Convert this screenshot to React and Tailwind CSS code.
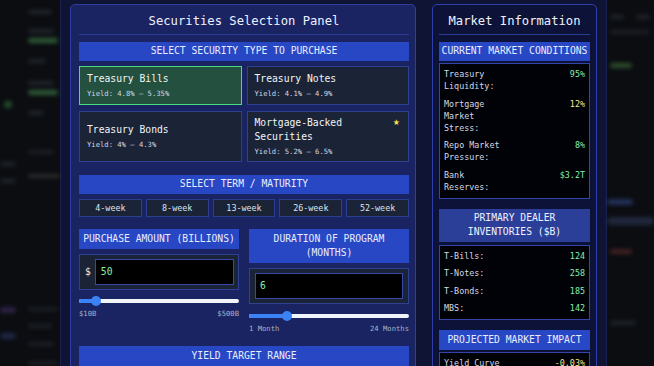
import React from 'react';

const securities = [
  { name: 'Treasury Bills', yieldRange: '4.8% – 5.35%', selected: true },
  { name: 'Treasury Notes', yieldRange: '4.1% – 4.9%' },
  { name: 'Treasury Bonds', yieldRange: '4% – 4.3%' },
  { name: 'Mortgage-Backed Securities', yieldRange: '5.2% – 6.5%', star: true },
];

const terms = ['4-week', '8-week', '13-week', '26-week', '52-week'];

const conditions = [
  { label: 'Treasury Liquidity:', value: '95%', tone: 'green' },
  { label: 'Mortgage Market Stress:', value: '12%', tone: 'yellow' },
  { label: 'Repo Market Pressure:', value: '8%', tone: 'green' },
  { label: 'Bank Reserves:', value: '$3.2T', tone: 'green' },
];

const inventories = [
  { label: 'T-Bills:', value: '124' },
  { label: 'T-Notes:', value: '258' },
  { label: 'T-Bonds:', value: '185' },
  { label: 'MBS:', value: '142' },
];

const impact = [
  { label: 'Yield Curve Impact:', value: '-0.03%', tone: 'yellow' },
  { label: 'Mortgage Rate Effect:', value: '-0.02%', tone: 'green' },
];

const toneClass = (tone) => (tone === 'yellow' ? 'text-[#fde68a]' : 'text-[#86efac]');

// blurred dashboard behind the modal
const Bar = ({ className }) => <div className={`h-[4px] rounded-sm ${className}`}></div>;

const Slider = ({ percent }) => (
  <div className="relative flex h-[10px] items-center">
    <div className="h-[4px] w-full overflow-hidden rounded-full bg-[#f1f5f9]">
      <div className="h-full bg-[#3b82f6]" style={{ width: `${percent}%` }}></div>
    </div>
    <div className="absolute top-0 -ml-[5px] h-[10px] w-[10px] rounded-full bg-[#3b82f6]" style={{ left: `${percent}%` }}></div>
  </div>
);

const PanelTitle = ({ children }) => (
  <div className="border-b border-[#2b3c95] pt-[8px] pb-[5px] text-center text-[12.2px] leading-[16px] text-[#eef2ff]">
    {children}
  </div>
);

const InfoBox = ({ rows, className = '' }) => (
  <div className={`flex flex-col gap-[5.5px] border border-[#3345a8] bg-[#010208] px-[4px] pt-[4px] pb-[5px] text-[8.4px] leading-[12px] text-[#d4d8e2] ${className}`}>
    {rows.map((row) => (
      <div key={row.label} className="flex items-start justify-between">
        <span className="max-w-[66px]">{row.label}</span>
        <span className={`text-right ${toneClass(row.tone)}`}>{row.value}</span>
      </div>
    ))}
  </div>
);

const Header = ({ children, className = '' }) => (
  <div className={`flex items-center justify-center whitespace-nowrap bg-[#2847c4] text-[9.7px] text-[#e8edff] ${className}`}>
    {children}
  </div>
);

export default function App() {
  return (
    <div className="flex h-[366px] w-[654px] overflow-hidden bg-[#0b0d11] font-['DejaVu_Sans_Mono','Liberation_Mono',monospace]">
      {/* left edge of the dimmed dashboard */}
      <div className="flex w-[60px] shrink-0 gap-[12px] opacity-70 blur-[2px]">
        <div className="flex w-[16px] flex-col pt-[101px]">
          <div className="ml-[4px] h-[7px] w-[8px] rounded-sm bg-[#2f6a36]"></div>
          <div className="mt-[54px] flex flex-col gap-[13px]">
            <Bar className="w-[16px] bg-[#2b3038]" />
            <Bar className="w-[16px] bg-[#2b3038]" />
          </div>
          <div className="mt-[124px] flex flex-col gap-[20px]">
            <div className="h-[6px] w-[16px] rounded-sm bg-[#3b2b5c]"></div>
            <div className="h-[6px] w-[16px] rounded-sm bg-[#26325e]"></div>
          </div>
        </div>
        <div className="flex flex-1 flex-col gap-[5px] pt-[10px]">
          <Bar className="w-[24px] bg-[#2b3038]" />
          <Bar className="mt-[10px] w-[26px] bg-[#2b3038]" />
          <div className="h-[5px] w-[30px] rounded-sm bg-[#3f7d48]"></div>
          <Bar className="mt-[11px] w-[18px] bg-[#2b3038]" />
          <Bar className="mt-[13px] w-[26px] bg-[#2b3038]" />
          <div className="h-[5px] w-[30px] rounded-sm bg-[#3f7d48]"></div>
          <Bar className="mt-[11px] w-[16px] bg-[#2b3038]" />
          <Bar className="mt-[30px] w-[26px] bg-[#23272e]" />
          <Bar className="mt-[15px] w-[32px] bg-[#3a3a36]" />
          <Bar className="mt-[124px] w-[30px] bg-[#23272e]" />
          <Bar className="mt-[8px] w-[24px] bg-[#23272e]" />
          <Bar className="mt-[9px] w-[26px] bg-[#23272e]" />
          <Bar className="mt-[10px] w-[30px] bg-[#23272e]" />
        </div>
      </div>

      {/* modal */}
      <div className="flex w-[547px] shrink-0 items-start gap-[16px] border-x border-[#1b2150] bg-[#0f1434] px-[9px] pt-[4px]">
        {/* Securities Selection Panel */}
        <div className="h-[400px] w-[346px] shrink-0 rounded-t-[5px] border border-[#2f3f9f] bg-[#1b2462] pl-[8px] pr-[6px]">
          <PanelTitle>Securities Selection Panel</PanelTitle>

          <Header className="mt-[7px] h-[19px]">SELECT SECURITY TYPE TO PURCHASE</Header>

          <div className="mt-[5px] grid grid-cols-2 grid-rows-[39px_51px] gap-x-[5px] gap-y-[6px]">
            {securities.map((s) => (
              <div
                key={s.name}
                className={`flex flex-col justify-center border px-[7px] ${
                  s.selected ? 'border-[#4ade80] bg-[#24513f]' : 'border-[#2e4191] bg-[#1b2436]'
                }`}
              >
                <div className="flex items-start justify-between">
                  <span className="text-[9.7px] leading-[14px] text-[#f1f5f9]">{s.name}</span>
                  {s.star && <span className="mt-[1px] mr-[1px] font-['DejaVu_Sans',sans-serif] text-[8px] leading-[12px] text-[#fde047]">★</span>}
                </div>
                <div className="mt-[3px] text-[7.2px] leading-[10px] text-[#cfd6e4]">Yield: {s.yieldRange}</div>
              </div>
            ))}
          </div>

          <Header className="mt-[13px] h-[19px]">SELECT TERM / MATURITY</Header>

          <div className="mt-[5px] grid grid-cols-5 gap-[4px]">
            {terms.map((t) => (
              <div key={t} className="flex h-[18px] items-center justify-center border border-[#2c3e8e] bg-[#1b2436] text-[8.4px] text-[#dde3ef]">
                {t}
              </div>
            ))}
          </div>

          <div className="mt-[12px] grid grid-cols-2 gap-x-[10px]">
            <div>
              <Header className="h-[20px]">PURCHASE AMOUNT (BILLIONS)</Header>
              <div className="mt-[5px] flex h-[36px] items-center gap-[4px] border border-[#2e4191] bg-[#1b2436] pl-[5px] pr-[4px]">
                <span className="text-[9.7px] text-[#e5e7eb]">$</span>
                <div className="flex h-[26px] flex-1 items-center border border-[#3848a8] bg-black pl-[5px] text-[9.7px] text-[#86efac]">
                  50
                </div>
              </div>
              <div className="mt-[6px]">
                <Slider percent={10.7} />
              </div>
              <div className="mt-[3px] flex justify-between text-[7.2px] leading-[10px] text-[#aab3c5]">
                <span>$10B</span>
                <span>$500B</span>
              </div>
            </div>

            <div>
              <div className="bg-[#2847c4] px-[2px] py-[3px] text-center text-[9.7px] leading-[14px] text-[#e8edff]">
                DURATION OF PROGRAM (MONTHS)
              </div>
              <div className="mt-[5px] flex h-[36px] items-center border border-[#2e4191] bg-[#1b2436] px-[5px]">
                <div className="flex h-[26px] flex-1 items-center border border-[#3848a8] bg-black pl-[4px] text-[9.7px] text-[#86efac]">
                  6
                </div>
              </div>
              <div className="mt-[7px]">
                <Slider percent={23.8} />
              </div>
              <div className="mt-[3px] flex justify-between text-[7.2px] leading-[10px] text-[#aab3c5]">
                <span>1 Month</span>
                <span>24 Months</span>
              </div>
            </div>
          </div>

          <Header className="mt-[12px] h-[20px]">YIELD TARGET RANGE</Header>
        </div>

        {/* Market Information */}
        <div className="h-[400px] w-[165px] shrink-0 rounded-t-[5px] border border-[#3040a8] bg-[#0c1238] px-[6px]">
          <PanelTitle>Market Information</PanelTitle>

          <Header className="mt-[7px] h-[19px] bg-[#2b3f98]">CURRENT MARKET CONDITIONS</Header>
          <InfoBox rows={conditions} className="mt-[2px]" />

          <div className="mt-[10px] bg-[#2b3f98] py-[2.5px] text-center text-[9.7px] leading-[14px] text-[#eef2ff]">
            PRIMARY DEALER INVENTORIES ($B)
          </div>
          <InfoBox rows={inventories} className="mt-[3px]" />

          <Header className="mt-[10px] h-[20px] bg-[#2b3f98]">PROJECTED MARKET IMPACT</Header>
          <InfoBox rows={impact} className="mt-[2px]" />
        </div>
      </div>

      {/* right edge of the dimmed dashboard */}
      <div className="flex flex-1 flex-col gap-[12px] pt-[15px] pl-[3px] opacity-70 blur-[2px]">
        <div className="flex gap-[12px]">
          <Bar className="w-[14px] bg-[#2b3038]" />
          <Bar className="w-[14px] bg-[#2b3038]" />
        </div>
        <Bar className="-mt-[1px] w-[40px] bg-[#23272e]" />
        <div className="mt-[17px] h-[5px] w-[22px] rounded-sm bg-[#3f6a3a]"></div>
        <div className="-ml-[3px] mt-[119px] h-[6px] w-[26px] rounded-sm bg-[#2e3f78]"></div>
        <div className="-ml-[3px] h-[8px] w-[47px] rounded-sm bg-[#2a3350]"></div>
        <div className="mt-[12px] h-[5px] w-[22px] rounded-sm bg-[#5a2a2a]"></div>
        <Bar className="mt-[55px] w-[26px] bg-[#2b3038]" />
      </div>
    </div>
  );
}
